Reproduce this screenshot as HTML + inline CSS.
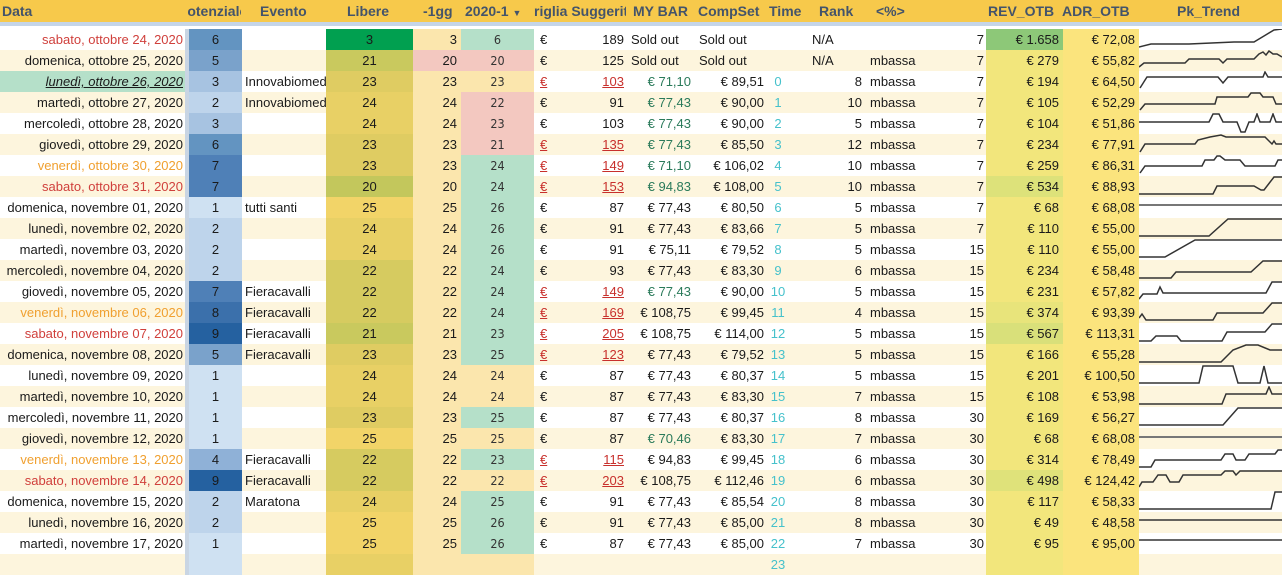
<!DOCTYPE html>
<html><head><meta charset="utf-8"><style>
*{margin:0;padding:0;box-sizing:border-box}
body{width:1282px;height:557px;overflow:hidden;background:#fff;font-family:"Liberation Sans",sans-serif;font-size:13px;color:#1a1a1a;position:relative}
#hd{position:absolute;left:0;top:0;width:1282px;height:22px;background:#f7c94b;font-weight:bold;color:#44546a;font-size:14px}
#hd span{position:absolute;top:3px;white-space:nowrap}
#band{position:absolute;left:0;top:22px;width:1282px;height:4px;background:#c5d5e8}
table{position:absolute;left:0;top:29px;border-collapse:collapse;table-layout:fixed;width:1282px}
td{height:21px;line-height:21px;padding:0 2px;white-space:nowrap;overflow:hidden;text-align:right}
tr.w{background:#fff}tr.c{background:#fdf5dd}
td.s{background:#c9d5e3;padding:0}
td.p{text-align:center}
td.e{text-align:left;padding-left:3px}
td.l{text-align:center}
td.g{background:#fbe6ad;padding-right:4px}
td.y{text-align:center;font-size:12.5px;color:#333;font-family:"DejaVu Sans Condensed","Liberation Sans",sans-serif}
.yg{background:#b5e0c9}.yp{background:#f3c8c0}.yy{background:#fbe6ad}
td.eu{text-align:left;padding-left:6px}
.rl{color:#c8302c;text-decoration:underline}
td.mb{padding-right:3px}
.gn{color:#2a7a5a}
td.so{text-align:left;padding-left:5px}
td.t{text-align:center;color:#45c1cb}
td.rk{padding-right:4px}
td.na{text-align:left;padding-left:22px}
td.m{text-align:left;padding-left:4px}
td.rv{background:#f2e67c;padding-right:4px}
td.ad{background:#fbe47d;padding-right:4px}
td.pk{padding:0}
td.pk svg{display:block}
.dr{color:#d0403c}.do{color:#f0a030}
.p1{background:#cfe1f2}.p2{background:#bed4eb}.p3{background:#a7c3e1}.p4{background:#8fb1d7}.p5{background:#7aa2cb}.p6{background:#6394c1}.p7{background:#4f80b7}.p8{background:#3b70ab}.p9{background:#2561a0}
.L3{background:#01a050}.L20{background:#c3c75c}.L21{background:#c9c95e}.L22{background:#d6cb60}.L23{background:#dfcc62}.L24{background:#e8d065}.L25{background:#f2d468}
polyline{fill:none;stroke:#333;stroke-width:1.5}
</style></head><body>
<div id="hd">
<span style="left:2px">Data</span>
<span style="left:188px;width:53px;height:18px;overflow:hidden"><span style="left:-10px;top:0">Potenziale</span></span>
<span style="left:260px">Evento</span>
<span style="left:347px">Libere</span>
<span style="left:423px">-1gg</span>
<span style="left:465px">2020-1 <span style="position:static;font-size:9px">▼</span></span>
<span style="left:534px;width:92px;overflow:hidden">riglia Suggerito</span>
<span style="left:633px">MY BAR</span>
<span style="left:698px">CompSet</span>
<span style="left:769px">Time</span>
<span style="left:819px">Rank</span>
<span style="left:876px">&lt;%&gt;</span>
<span style="left:988px">REV_OTB</span>
<span style="left:1062px">ADR_OTB</span>
<span style="left:1177px">Pk_Trend</span>
</div>
<div id="band"></div>
<table>
<colgroup><col style="width:185px"><col style="width:4px"><col style="width:53px"><col style="width:84px"><col style="width:87px"><col style="width:48px"><col style="width:73px"><col style="width:22px"><col style="width:70px"><col style="width:68px"><col style="width:72px"><col style="width:24px"><col style="width:76px"><col style="width:70px"><col style="width:50px"><col style="width:77px"><col style="width:76px"><col style="width:143px"></colgroup>
<tr class="w"><td class="dr">sabato, ottobre 24, 2020</td><td class="s"></td><td class="p p6">6</td><td class="e"></td><td class="l L3">3</td><td class="g">3</td><td class="y yg">6</td><td class="eu">€</td><td>189</td><td class="so">Sold out</td><td class="so">Sold out</td><td class="t"></td><td class="na">N/A</td><td class="m"></td><td>7</td><td class="rv" style="background:#8dc878">€ 1.658</td><td class="ad">€ 72,08</td><td class="pk"><svg width="143" height="21"><polyline points="0,18 12,15 50,15 95,13 115,13 125,7 135,1 143,0"/></svg></td></tr>
<tr class="c"><td>domenica, ottobre 25, 2020</td><td class="s"></td><td class="p p5">5</td><td class="e"></td><td class="l L21">21</td><td class="g" style="background:#f3c8c0">20</td><td class="y yp">20</td><td class="eu">€</td><td>125</td><td class="so">Sold out</td><td class="so">Sold out</td><td class="t"></td><td class="na">N/A</td><td class="m">mbassa</td><td>7</td><td class="rv">€ 279</td><td class="ad">€ 55,82</td><td class="pk"><svg width="143" height="21"><polyline points="0,17 5,13 46,13 50,9 80,9 84,13 88,9 115,9 120,4 124,2 127,5 130,1 134,4 138,4 143,7"/></svg></td></tr>
<tr class="w"><td style="background:#b5e0c9;font-style:italic;text-decoration:underline">lunedì, ottobre 26, 2020</td><td class="s"></td><td class="p p3">3</td><td class="e">Innovabiomed</td><td class="l L23">23</td><td class="g">23</td><td class="y yy">23</td><td class="eu rl">€</td><td><span class="rl">103</span></td><td class="mb gn">€ 71,10</td><td>€ 89,51</td><td class="t">0</td><td class="rk">8</td><td class="m">mbassa</td><td>7</td><td class="rv">€ 194</td><td class="ad">€ 64,50</td><td class="pk"><svg width="143" height="21"><polyline points="1,17 8,6 79,6 84,12 89,6 124,6 126,1 129,6 143,6"/></svg></td></tr>
<tr class="c"><td>martedì, ottobre 27, 2020</td><td class="s"></td><td class="p p2">2</td><td class="e">Innovabiomed</td><td class="l L24">24</td><td class="g">24</td><td class="y yp">22</td><td class="eu">€</td><td>91</td><td class="mb gn">€ 77,43</td><td>€ 90,00</td><td class="t">1</td><td class="rk">10</td><td class="m">mbassa</td><td>7</td><td class="rv">€ 105</td><td class="ad">€ 52,29</td><td class="pk"><svg width="143" height="21"><polyline points="1,18 6,12 76,12 78,5 109,5 112,1 121,1 124,5 134,5 137,12 143,12"/></svg></td></tr>
<tr class="w"><td>mercoledì, ottobre 28, 2020</td><td class="s"></td><td class="p p3">3</td><td class="e"></td><td class="l L24">24</td><td class="g">24</td><td class="y yp">23</td><td class="eu">€</td><td>103</td><td class="mb gn">€ 77,43</td><td>€ 90,00</td><td class="t">2</td><td class="rk">5</td><td class="m">mbassa</td><td>7</td><td class="rv">€ 104</td><td class="ad">€ 51,86</td><td class="pk"><svg width="143" height="21"><polyline points="0,9 70,9 74,1 80,1 84,9 98,9 102,19 106,19 110,9 115,9 118,1 121,9 131,9 134,1 137,9 143,9"/></svg></td></tr>
<tr class="c"><td>giovedì, ottobre 29, 2020</td><td class="s"></td><td class="p p6">6</td><td class="e"></td><td class="l L23">23</td><td class="g">23</td><td class="y yp">21</td><td class="eu rl">€</td><td><span class="rl">135</span></td><td class="mb gn">€ 77,43</td><td>€ 85,50</td><td class="t">3</td><td class="rk">12</td><td class="m">mbassa</td><td>7</td><td class="rv">€ 234</td><td class="ad">€ 77,91</td><td class="pk"><svg width="143" height="21"><polyline points="1,18 6,10 56,10 59,6 71,3 82,1 87,3 126,3 133,10 135,7 137,10 143,10"/></svg></td></tr>
<tr class="w"><td class="do">venerdì, ottobre 30, 2020</td><td class="s"></td><td class="p p7">7</td><td class="e"></td><td class="l L23">23</td><td class="g">23</td><td class="y yg">24</td><td class="eu rl">€</td><td><span class="rl">149</span></td><td class="mb gn">€ 71,10</td><td>€ 106,02</td><td class="t">4</td><td class="rk">10</td><td class="m">mbassa</td><td>7</td><td class="rv">€ 259</td><td class="ad">€ 86,31</td><td class="pk"><svg width="143" height="21"><polyline points="1,18 6,11 63,11 66,5 75,5 78,1 81,1 86,5 101,5 106,11 136,11 139,5 143,5"/></svg></td></tr>
<tr class="c"><td class="dr">sabato, ottobre 31, 2020</td><td class="s"></td><td class="p p7">7</td><td class="e"></td><td class="l L20">20</td><td class="g">20</td><td class="y yg">24</td><td class="eu rl">€</td><td><span class="rl">153</span></td><td class="mb gn">€ 94,83</td><td>€ 108,00</td><td class="t">5</td><td class="rk">10</td><td class="m">mbassa</td><td>7</td><td class="rv" style="background:#dde27a">€ 534</td><td class="ad">€ 88,93</td><td class="pk"><svg width="143" height="21"><polyline points="0,18 74,18 78,10 115,10 122,14 125,14 135,1 143,1"/></svg></td></tr>
<tr class="w"><td>domenica, novembre 01, 2020</td><td class="s"></td><td class="p p1">1</td><td class="e">tutti santi</td><td class="l L25">25</td><td class="g">25</td><td class="y yg">26</td><td class="eu">€</td><td>87</td><td class="mb">€ 77,43</td><td>€ 80,50</td><td class="t">6</td><td class="rk">5</td><td class="m">mbassa</td><td>7</td><td class="rv">€ 68</td><td class="ad">€ 68,08</td><td class="pk"><svg width="143" height="21"><polyline points="0,8 143,8" style="stroke:#777;stroke-width:2"/></svg></td></tr>
<tr class="c"><td>lunedì, novembre 02, 2020</td><td class="s"></td><td class="p p2">2</td><td class="e"></td><td class="l L24">24</td><td class="g">24</td><td class="y yg">26</td><td class="eu">€</td><td>91</td><td class="mb">€ 77,43</td><td>€ 83,66</td><td class="t">7</td><td class="rk">5</td><td class="m">mbassa</td><td>7</td><td class="rv">€ 110</td><td class="ad">€ 55,00</td><td class="pk"><svg width="143" height="21"><polyline points="0,18 70,18 89,1 143,1"/></svg></td></tr>
<tr class="w"><td>martedì, novembre 03, 2020</td><td class="s"></td><td class="p p2">2</td><td class="e"></td><td class="l L24">24</td><td class="g">24</td><td class="y yg">26</td><td class="eu">€</td><td>91</td><td class="mb">€ 75,11</td><td>€ 79,52</td><td class="t">8</td><td class="rk">5</td><td class="m">mbassa</td><td>15</td><td class="rv">€ 110</td><td class="ad">€ 55,00</td><td class="pk"><svg width="143" height="21"><polyline points="0,18 26,18 56,1 143,1"/></svg></td></tr>
<tr class="c"><td>mercoledì, novembre 04, 2020</td><td class="s"></td><td class="p p2">2</td><td class="e"></td><td class="l L22">22</td><td class="g">22</td><td class="y yg">24</td><td class="eu">€</td><td>93</td><td class="mb">€ 77,43</td><td>€ 83,30</td><td class="t">9</td><td class="rk">6</td><td class="m">mbassa</td><td>15</td><td class="rv">€ 234</td><td class="ad">€ 58,48</td><td class="pk"><svg width="143" height="21"><polyline points="0,18 32,18 37,12 112,12 124,1 143,1"/></svg></td></tr>
<tr class="w"><td>giovedì, novembre 05, 2020</td><td class="s"></td><td class="p p7">7</td><td class="e">Fieracavalli</td><td class="l L22">22</td><td class="g">22</td><td class="y yg">24</td><td class="eu rl">€</td><td><span class="rl">149</span></td><td class="mb gn">€ 77,43</td><td>€ 90,00</td><td class="t">10</td><td class="rk">5</td><td class="m">mbassa</td><td>15</td><td class="rv">€ 231</td><td class="ad">€ 57,82</td><td class="pk"><svg width="143" height="21"><polyline points="0,18 4,13 18,13 21,6 24,12 127,12 133,1 143,1"/></svg></td></tr>
<tr class="c"><td class="do">venerdì, novembre 06, 2020</td><td class="s"></td><td class="p p8">8</td><td class="e">Fieracavalli</td><td class="l L22">22</td><td class="g">22</td><td class="y yg">24</td><td class="eu rl">€</td><td><span class="rl">169</span></td><td class="mb">€ 108,75</td><td>€ 99,45</td><td class="t">11</td><td class="rk">4</td><td class="m">mbassa</td><td>15</td><td class="rv" style="background:#e8e47b">€ 374</td><td class="ad">€ 93,39</td><td class="pk"><svg width="143" height="21"><polyline points="0,16 3,12 7,18 74,18 78,11 124,11 133,1 143,1"/></svg></td></tr>
<tr class="w"><td class="dr">sabato, novembre 07, 2020</td><td class="s"></td><td class="p p9">9</td><td class="e">Fieracavalli</td><td class="l L21">21</td><td class="g">21</td><td class="y yg">23</td><td class="eu rl">€</td><td><span class="rl">205</span></td><td class="mb">€ 108,75</td><td>€ 114,00</td><td class="t">12</td><td class="rk">5</td><td class="m">mbassa</td><td>15</td><td class="rv" style="background:#d9e07a">€ 567</td><td class="ad">€ 113,31</td><td class="pk"><svg width="143" height="21"><polyline points="0,18 12,18 17,13 38,13 42,18 83,18 88,9 126,9 133,1 143,1"/></svg></td></tr>
<tr class="c"><td>domenica, novembre 08, 2020</td><td class="s"></td><td class="p p5">5</td><td class="e">Fieracavalli</td><td class="l L23">23</td><td class="g">23</td><td class="y yg">25</td><td class="eu rl">€</td><td><span class="rl">123</span></td><td class="mb">€ 77,43</td><td>€ 79,52</td><td class="t">13</td><td class="rk">5</td><td class="m">mbassa</td><td>15</td><td class="rv">€ 166</td><td class="ad">€ 55,28</td><td class="pk"><svg width="143" height="21"><polyline points="0,18 82,18 94,6 107,1 119,1 131,6 143,6"/></svg></td></tr>
<tr class="w"><td>lunedì, novembre 09, 2020</td><td class="s"></td><td class="p p1">1</td><td class="e"></td><td class="l L24">24</td><td class="g">24</td><td class="y yy">24</td><td class="eu">€</td><td>87</td><td class="mb">€ 77,43</td><td>€ 80,37</td><td class="t">14</td><td class="rk">5</td><td class="m">mbassa</td><td>15</td><td class="rv">€ 201</td><td class="ad">€ 100,50</td><td class="pk"><svg width="143" height="21"><polyline points="0,18 60,18 64,1 94,1 99,18 121,18 125,1 129,18 143,18"/></svg></td></tr>
<tr class="c"><td>martedì, novembre 10, 2020</td><td class="s"></td><td class="p p1">1</td><td class="e"></td><td class="l L24">24</td><td class="g">24</td><td class="y yy">24</td><td class="eu">€</td><td>87</td><td class="mb">€ 77,43</td><td>€ 83,30</td><td class="t">15</td><td class="rk">7</td><td class="m">mbassa</td><td>15</td><td class="rv">€ 108</td><td class="ad">€ 53,98</td><td class="pk"><svg width="143" height="21"><polyline points="0,18 83,18 87,8 127,8 130,1 133,8 143,8"/></svg></td></tr>
<tr class="w"><td>mercoledì, novembre 11, 2020</td><td class="s"></td><td class="p p1">1</td><td class="e"></td><td class="l L23">23</td><td class="g">23</td><td class="y yg">25</td><td class="eu">€</td><td>87</td><td class="mb">€ 77,43</td><td>€ 80,37</td><td class="t">16</td><td class="rk">8</td><td class="m">mbassa</td><td>30</td><td class="rv">€ 169</td><td class="ad">€ 56,27</td><td class="pk"><svg width="143" height="21"><polyline points="0,18 84,18 99,1 143,1"/></svg></td></tr>
<tr class="c"><td>giovedì, novembre 12, 2020</td><td class="s"></td><td class="p p1">1</td><td class="e"></td><td class="l L25">25</td><td class="g">25</td><td class="y yy">25</td><td class="eu">€</td><td>87</td><td class="mb gn">€ 70,46</td><td>€ 83,30</td><td class="t">17</td><td class="rk">7</td><td class="m">mbassa</td><td>30</td><td class="rv">€ 68</td><td class="ad">€ 68,08</td><td class="pk"><svg width="143" height="21"><polyline points="0,9 143,9" style="stroke:#777;stroke-width:2"/></svg></td></tr>
<tr class="w"><td class="do">venerdì, novembre 13, 2020</td><td class="s"></td><td class="p p4">4</td><td class="e">Fieracavalli</td><td class="l L22">22</td><td class="g">22</td><td class="y yg">23</td><td class="eu rl">€</td><td><span class="rl">115</span></td><td class="mb">€ 94,83</td><td>€ 99,45</td><td class="t">18</td><td class="rk">6</td><td class="m">mbassa</td><td>30</td><td class="rv">€ 314</td><td class="ad">€ 78,49</td><td class="pk"><svg width="143" height="21"><polyline points="0,18 12,18 16,11 82,11 86,5 94,5 97,11 106,11 110,5 136,5 139,1 143,1"/></svg></td></tr>
<tr class="c"><td class="dr">sabato, novembre 14, 2020</td><td class="s"></td><td class="p p9">9</td><td class="e">Fieracavalli</td><td class="l L22">22</td><td class="g">22</td><td class="y yy">22</td><td class="eu rl">€</td><td><span class="rl">203</span></td><td class="mb">€ 108,75</td><td>€ 112,46</td><td class="t">19</td><td class="rk">6</td><td class="m">mbassa</td><td>30</td><td class="rv" style="background:#dfe27a">€ 498</td><td class="ad">€ 124,42</td><td class="pk"><svg width="143" height="21"><polyline points="0,17 3,12 14,12 19,5 27,5 31,12 40,12 44,5 82,5 86,1 94,1 97,5 101,1 143,1"/></svg></td></tr>
<tr class="w"><td>domenica, novembre 15, 2020</td><td class="s"></td><td class="p p2">2</td><td class="e">Maratona</td><td class="l L24">24</td><td class="g">24</td><td class="y yg">25</td><td class="eu">€</td><td>91</td><td class="mb">€ 77,43</td><td>€ 85,54</td><td class="t">20</td><td class="rk">8</td><td class="m">mbassa</td><td>30</td><td class="rv">€ 117</td><td class="ad">€ 58,33</td><td class="pk"><svg width="143" height="21"><polyline points="0,18 132,18 136,1 143,1"/></svg></td></tr>
<tr class="c"><td>lunedì, novembre 16, 2020</td><td class="s"></td><td class="p p2">2</td><td class="e"></td><td class="l L25">25</td><td class="g">25</td><td class="y yg">26</td><td class="eu">€</td><td>91</td><td class="mb">€ 77,43</td><td>€ 85,00</td><td class="t">21</td><td class="rk">8</td><td class="m">mbassa</td><td>30</td><td class="rv">€ 49</td><td class="ad">€ 48,58</td><td class="pk"><svg width="143" height="21"><polyline points="0,8 143,8"/></svg></td></tr>
<tr class="w"><td>martedì, novembre 17, 2020</td><td class="s"></td><td class="p p1">1</td><td class="e"></td><td class="l L25">25</td><td class="g">25</td><td class="y yg">26</td><td class="eu">€</td><td>87</td><td class="mb">€ 77,43</td><td>€ 85,00</td><td class="t">22</td><td class="rk">7</td><td class="m">mbassa</td><td>30</td><td class="rv">€ 95</td><td class="ad">€ 95,00</td><td class="pk"><svg width="143" height="21"><polyline points="0,7 143,7"/></svg></td></tr>
<tr class="c"><td></td><td class="s"></td><td class="p p1"></td><td class="e"></td><td class="l L24"></td><td class="g"></td><td class="y yy"></td><td></td><td></td><td></td><td></td><td class="t">23</td><td></td><td></td><td></td><td class="rv"></td><td class="ad"></td><td class="pk"></td></tr>
</table>
</body></html>
